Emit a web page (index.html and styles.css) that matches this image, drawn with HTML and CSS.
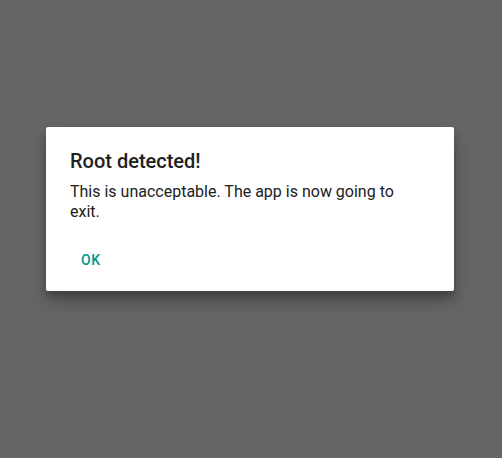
FILE: index.html
```html
<!DOCTYPE html>
<html>
<head>
<meta charset="utf-8">
<link rel="stylesheet" href="styles.css">
</head>
<body>
<div class="screen">
  <div class="dialog">
    <div class="title">Root detected!</div>
    <div class="message">This is unacceptable. The app is now going to exit.</div>
    <div class="actions">
      <button class="btn">OK</button>
    </div>
  </div>
</div>
</body>
</html>
```

FILE: styles.css
```css
html, body {
  margin: 0;
  padding: 0;
  background: #666666;
}
.screen {
  width: 502px;
  height: 458px;
  padding-top: 127px;
  padding-left: 46px;
  box-sizing: border-box;
}
.dialog {
  width: 408px;
  height: 164px;
  box-sizing: border-box;
  background: #ffffff;
  border-radius: 2px;
  box-shadow: 0 10px 20px rgba(0,0,0,0.25), 0 6px 6px rgba(0,0,0,0.2);
  padding: 22px 24px 0 24px;
  font-family: Roboto, "Noto Sans", sans-serif;
}
.title {
  font-size: 20px;
  font-weight: 500;
  line-height: 24px;
  color: #212121;
}
.message {
  margin-top: 9px;
  max-width: 345px;
  font-size: 16px;
  line-height: 20px;
  color: #212121;
}
.actions {
  margin-top: 20px;
  display: flex;
}
.btn {
  font-family: Roboto, "Noto Sans", sans-serif;
  font-size: 14px;
  font-weight: 500;
  letter-spacing: 0.5px;
  color: #009688;
  background: none;
  border: none;
  padding: 8px 11px;
  margin: 0;
  line-height: 20px;
}
```
